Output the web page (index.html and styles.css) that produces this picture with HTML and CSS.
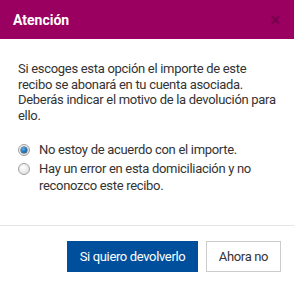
FILE: index.html
```html
<!DOCTYPE html>
<html lang="es">
<head>
<meta charset="utf-8">
<link rel="stylesheet" href="styles.css">
</head>
<body>
<div class="modal">
  <div class="modal-header">
    <h4 class="modal-title">Atención</h4>
    <span class="close">×</span>
  </div>
  <div class="modal-body">
    <p class="intro">Si escoges esta opción el importe de este recibo se abonará en tu cuenta asociada. Deberás indicar el motivo de la devolución para ello.</p>
    <label class="option"><span class="radio checked"></span><span class="opt-text">No estoy de acuerdo con el importe.</span></label>
    <label class="option"><span class="radio"></span><span class="opt-text">Hay un error en esta domiciliación y no reconozco este recibo.</span></label>
  </div>
  <div class="modal-footer">
    <button class="btn btn-primary">Si quiero devolverlo</button>
    <button class="btn btn-default">Ahora no</button>
  </div>
</div>
</body>
</html>
```
FILE: styles.css
```css
* { box-sizing: border-box; }
html, body { margin: 0; padding: 0; background: #fff; }
body { font-family: Roboto, "Liberation Sans", Arial, sans-serif; color: #333; }
.modal { width: 294px; height: 285px; background: #fff; }
.modal-header {
  height: 39px;
  background: #990060;
  display: flex;
  align-items: center;
  justify-content: space-between;
  padding: 0 13px 0 13px;
}
.modal-title { margin: 0; color: #fff; font-size: 14px; font-weight: 700; padding-top: 1px; }
.close { color: #000; opacity: 0.2; font-size: 18px; font-weight: 700; line-height: 1; margin-right: 1px; }
.modal-body { height: 186px; padding: 22px 16px 0 18px; font-size: 13px; letter-spacing: -0.3px; }
.intro { margin: 0 0 18px 0; line-height: 15.6px; }
.option { display: flex; align-items: flex-start; gap: 9px; margin-bottom: 2px; line-height: 17px; }
.radio {
  flex: none;
  width: 12px; height: 12px;
  margin-top: 3px;
  border-radius: 50%;
  border: 1px solid #a0a0a0;
  background: radial-gradient(circle at 40% 35%, #ffffff 0%, #e8e8e8 60%, #cfcfcf 100%);
  position: relative;
}
.radio.checked::after {
  content: "";
  position: absolute;
  left: 2px; top: 2px;
  width: 6px; height: 6px;
  border-radius: 50%;
  background: radial-gradient(circle at 40% 35%, #5fb0ea 0%, #1a6fb8 55%, #0b3f73 100%);
  box-shadow: 0 0 0 0.5px #123a60;
}
.modal-footer {
  border-top: 1px solid #e5e5e5;
  display: flex;
  justify-content: flex-end;
  gap: 8px;
  padding: 15px 13px;
}
.btn {
  font-family: Roboto, "Liberation Sans", Arial, sans-serif;
  font-size: 13px;
  letter-spacing: -0.35px;
  height: 31px;
  padding: 0;
  white-space: nowrap;
  border-radius: 0;
  cursor: pointer;
}
.btn-primary { background: #004f9c; color: #fff; border: 1px solid #004f9c; width: 131px; }
.btn-default { background: #fff; color: #333; border: 1px solid #ccc; width: 75px; }
```
